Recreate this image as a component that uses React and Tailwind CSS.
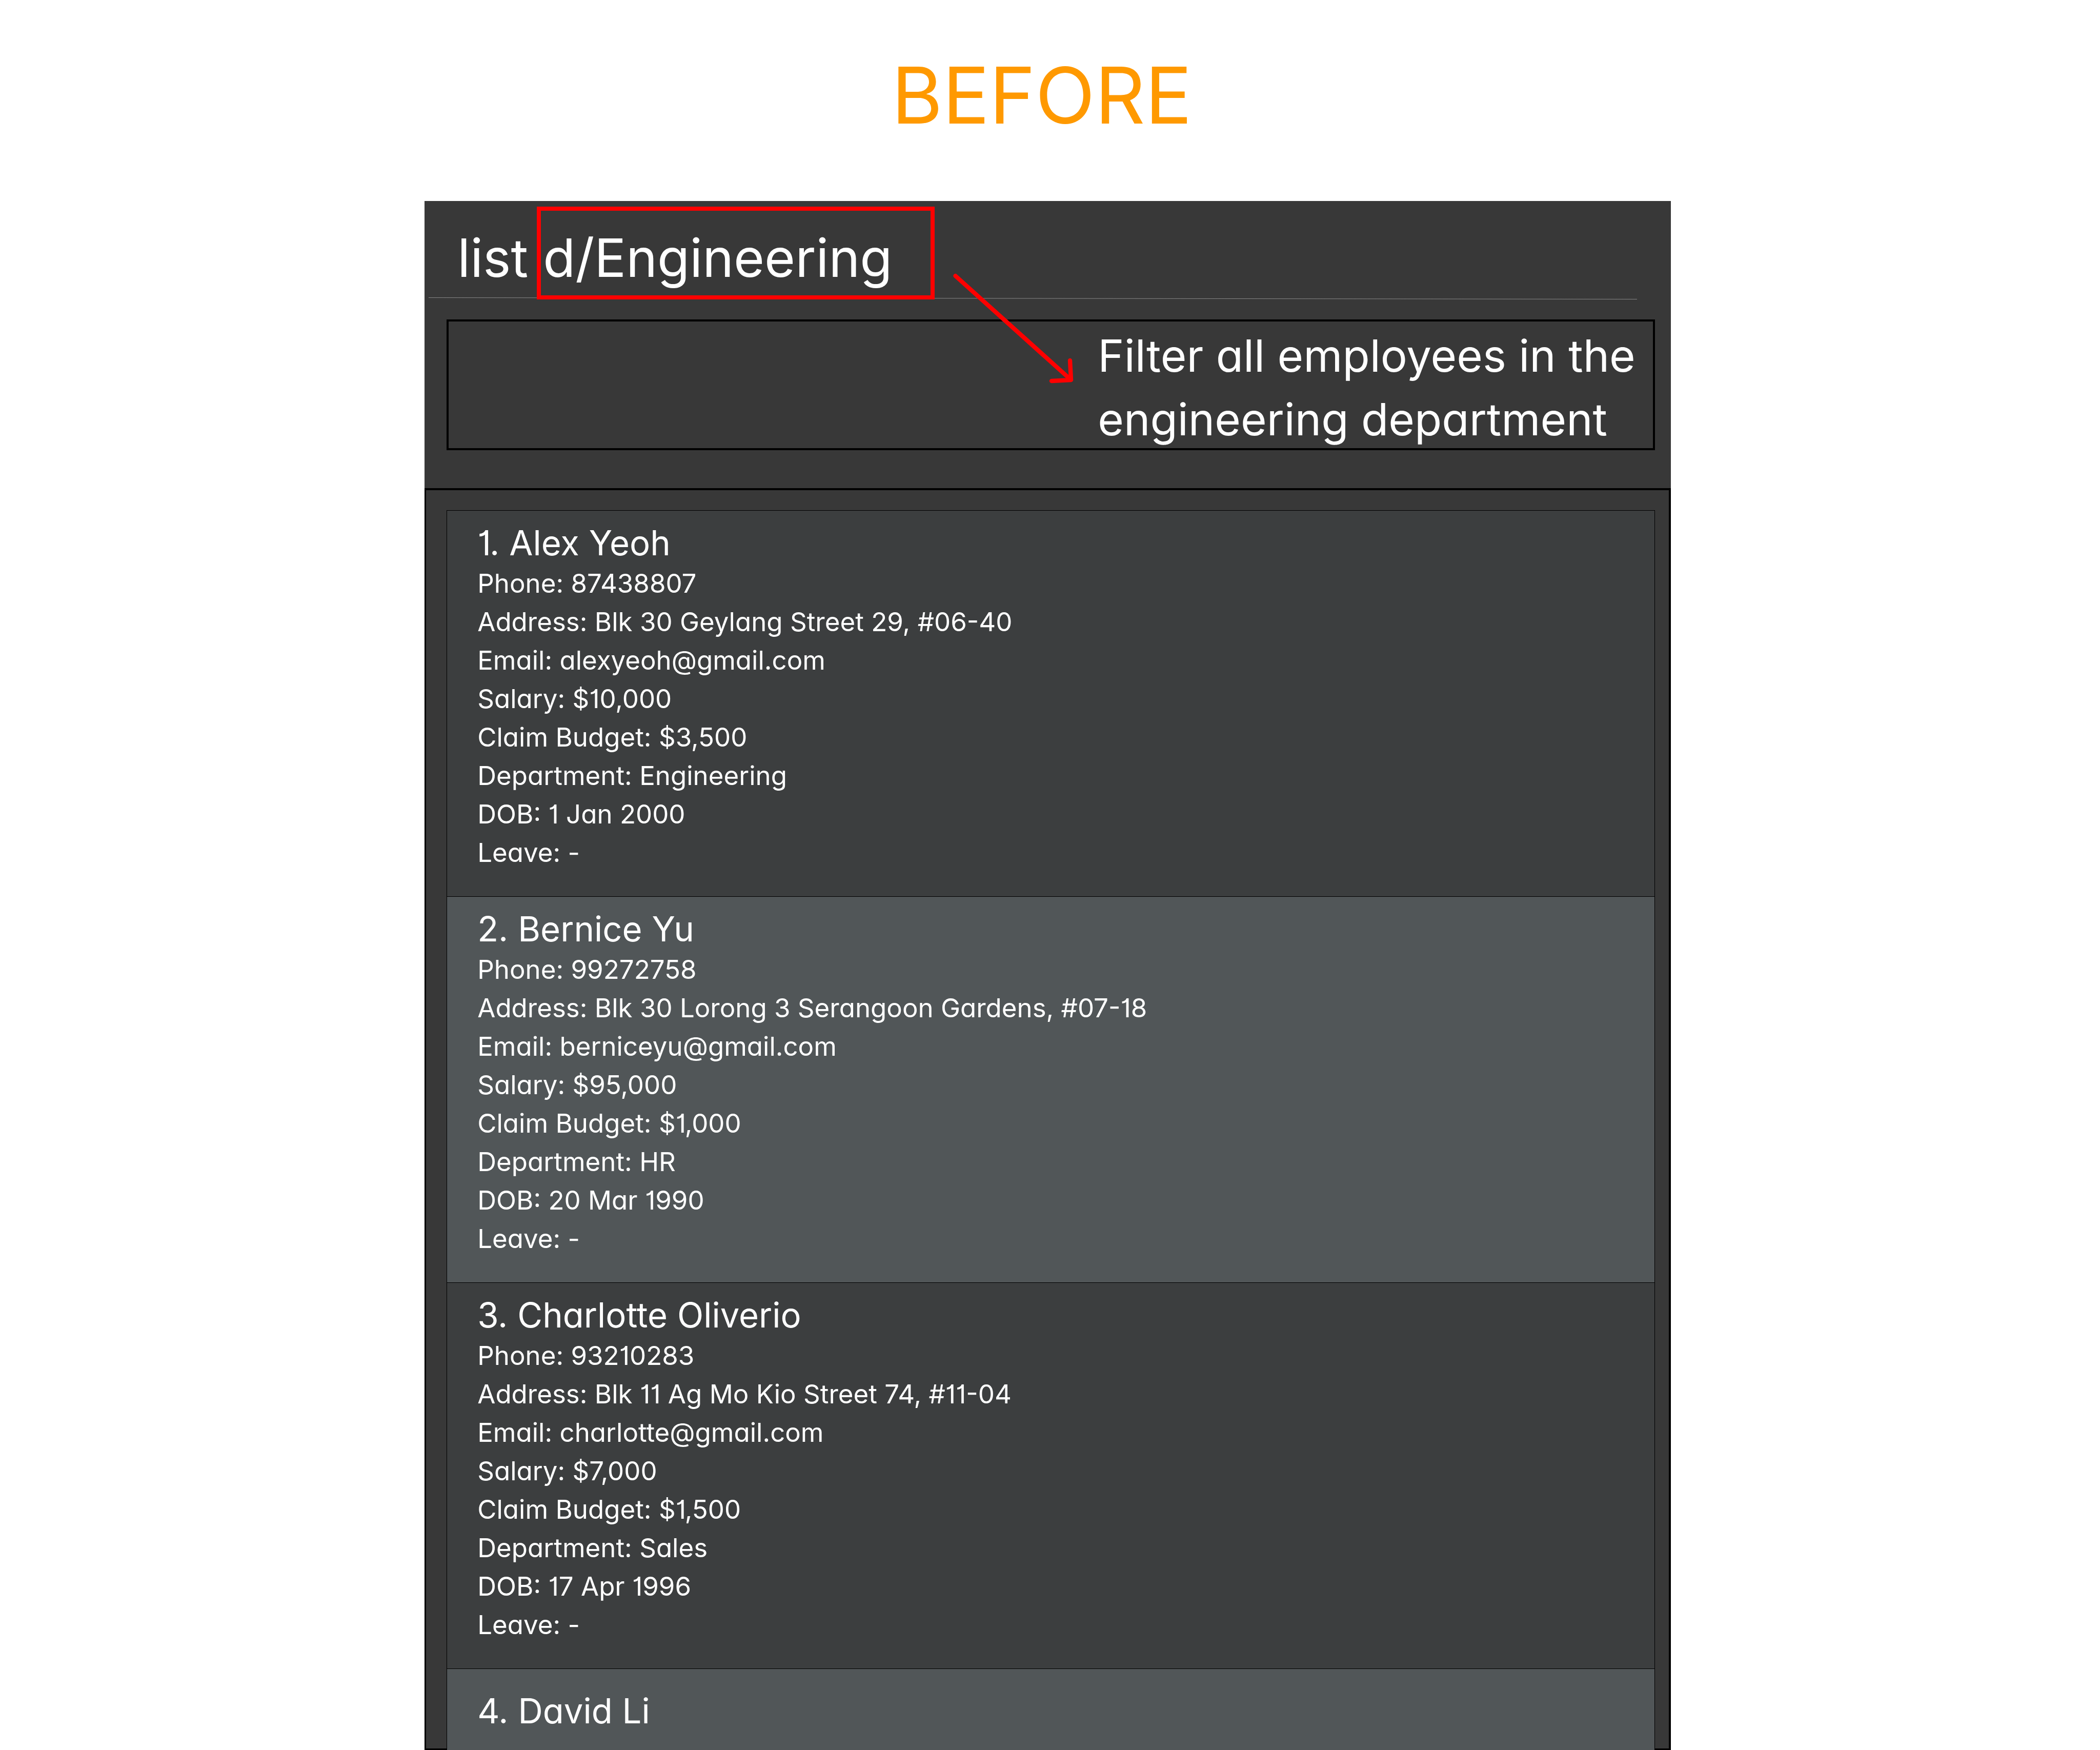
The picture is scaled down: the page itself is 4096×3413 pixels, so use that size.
const employees = [
  {
    id: 1,
    name: "Alex Yeoh",
    details: [
      ["Phone", "87438807"],
      ["Address", "Blk 30 Geylang Street 29, #06-40"],
      ["Email", "alexyeoh@gmail.com"],
      ["Salary", "$10,000"],
      ["Claim Budget", "$3,500"],
      ["Department", "Engineering"],
      ["DOB", "1 Jan 2000"],
      ["Leave", "-"],
    ],
  },
  {
    id: 2,
    name: "Bernice Yu",
    details: [
      ["Phone", "99272758"],
      ["Address", "Blk 30 Lorong 3 Serangoon Gardens, #07-18"],
      ["Email", "berniceyu@gmail.com"],
      ["Salary", "$95,000"],
      ["Claim Budget", "$1,000"],
      ["Department", "HR"],
      ["DOB", "20 Mar 1990"],
      ["Leave", "-"],
    ],
  },
  {
    id: 3,
    name: "Charlotte Oliverio",
    details: [
      ["Phone", "93210283"],
      ["Address", "Blk 11 Ag Mo Kio Street 74, #11-04"],
      ["Email", "charlotte@gmail.com"],
      ["Salary", "$7,000"],
      ["Claim Budget", "$1,500"],
      ["Department", "Sales"],
      ["DOB", "17 Apr 1996"],
      ["Leave", "-"],
    ],
  },
  { id: 4, name: "David Li", details: [] },
];

function EmployeeCard({ employee }) {
  const { id, name, details } = employee;
  return (
    <li
      className={`border-t border-black pl-[59px] odd:bg-[#3c3e3f] even:bg-[#515658] ${
        details.length > 0 ? "pt-[21px] pb-12" : "pt-10 pb-[35px]"
      }`}
    >
      <h2 className="text-[67px] leading-[83px]">
        {id}. {name}
      </h2>
      {details.map(([label, value]) => (
        <p key={label} className="text-[51px] leading-[75px]">
          {label}: {value}
        </p>
      ))}
    </li>
  );
}

function Annotations() {
  return (
    <>
      <div className="absolute top-[11px] left-[219px] h-[181px] w-[776px] border-8 border-[#ff0000]" />
      <svg
        className="absolute top-[132px] left-[1024px] h-[230px] w-[250px]"
        viewBox="0 0 250 230"
        fill="none"
        stroke="#ff0000"
        strokeWidth="8.4"
        strokeLinecap="round"
        strokeLinejoin="round"
        aria-hidden="true"
      >
        <path d="M11.5 14 L237 217 M235 179 L237 217 L199 219" />
      </svg>
    </>
  );
}

export default function App() {
  return (
    <main className="min-h-screen bg-white font-['Inter',sans-serif] [font-feature-settings:'cv11','cv01']">
      <h1 className="pt-[86px] pr-8 pb-[106px] text-center text-[152px] leading-[200px] text-[#ff9900]">
        BEFORE
      </h1>

      <section className="relative ml-[20.22%] w-[59.35%] bg-[#383838] text-white">
        <input
          type="text"
          aria-label="Command"
          defaultValue="list d/Engineering"
          className="block h-[187px] w-full bg-transparent pt-[34px] pl-[64px] text-[103px] outline-none"
        />
        <div className="pr-[66px] pl-2">
          <svg
            className="block h-[5px] w-full"
            viewBox="0 0 100 5"
            preserveAspectRatio="none"
            aria-hidden="true"
          >
            <line x1="0" y1="1.5" x2="100" y2="4.5" stroke="#888888" vectorEffect="non-scaling-stroke" />
          </svg>
        </div>

        <output className="mt-[39px] mr-[31px] mb-[74px] ml-[43px] block border-4 border-black">
          <p className="-mb-1.5 ml-[53.9%] pt-[5px] text-[87px] leading-[124px]">
            Filter all employees in the engineering department
          </p>
        </output>

        <div className="border-4 border-l-[3px] border-black pt-[39px] pr-[27px] pl-[40px]">
          <ul className="relative -mb-1 border-x border-b border-black">
            {employees.map((employee) => (
              <EmployeeCard key={employee.id} employee={employee} />
            ))}
          </ul>
        </div>

        <Annotations />
      </section>
    </main>
  );
}
